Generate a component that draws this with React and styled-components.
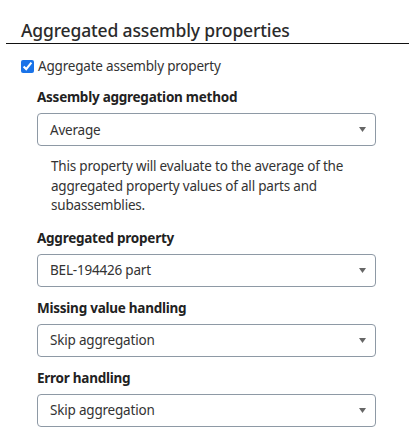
import styled, { createGlobalStyle } from 'styled-components';

const GlobalStyle = createGlobalStyle`
    body {
        margin: 0;
        background: #fff;
        font-family: "Noto Sans", "Open Sans", sans-serif;
        color: #333;
    }
`

const Panel = styled.div`
    width: 409px;
    padding-left: 6px;
    box-sizing: border-box;
`
const Header = styled.h2`
    margin: 0;
    padding: 18px 0 1px 15px;
    font-size: 17.5px;
    line-height: 24px;
    letter-spacing: -0.15px;
    font-weight: 500;
    color: #2b2b2b;
    border-bottom: 1px solid #111;
`
const CheckRow = styled.label`
    display: flex;
    align-items: center;
    height: 20px;
    margin-top: 12px;
    padding-left: 15px;
    font-size: 13.5px;
    letter-spacing: -0.2px;
    color: #333;
`
const Checkbox = styled.input`
    width: 13px;
    height: 13px;
    margin: 0 4px 0 0;
    accent-color: #1a73e8;
`
const Body = styled.div`
    display: flex;
    flex-direction: column;
    gap: 11px;
    padding: 11px 33px 0 31px;
`
const Field = styled.div`
    display: flex;
    flex-direction: column;
`
const Label = styled.div`
    font-size: 13.5px;
    line-height: 20px;
    letter-spacing: -0.25px;
    font-weight: 700;
    color: #222;
    margin-bottom: 6px;
`
const Select = styled.div`
    display: flex;
    align-items: center;
    justify-content: space-between;
    height: 33px;
    box-sizing: border-box;
    padding: 0 9px 0 12px;
    border: 1px solid #8e99a5;
    border-radius: 4px;
    font-size: 13.5px;
    letter-spacing: -0.2px;
    color: #333;
`
const Help = styled.p`
    margin: 11px 0 1px;
    padding: 0 14px;
    font-size: 13.5px;
    line-height: 19.5px;
    letter-spacing: -0.2px;
    color: #333;
`

function Caret() {
    return (
        <svg width="7" height="5" viewBox="0 0 7 5">
            <path d="M0 0 H7 L3.5 5 Z" fill="#666" />
        </svg>
    )
}

const fields = [
    {label: 'Assembly aggregation method', value: 'Average', help: 'This property will evaluate to the average of the aggregated property values of all parts and subassemblies.'},
    {label: 'Aggregated property', value: 'BEL-194426 part'},
    {label: 'Missing value handling', value: 'Skip aggregation'},
    {label: 'Error handling', value: 'Skip aggregation'},
]

export default function App() {
    return (
        <Panel>
            <GlobalStyle />
            <Header>Aggregated assembly properties</Header>
            <CheckRow>
                <Checkbox type="checkbox" defaultChecked />
                Aggregate assembly property
            </CheckRow>
            <Body>
                {fields.map((f) => (
                    <Field key={f.label}>
                        <Label>{f.label}</Label>
                        <Select>
                            <span>{f.value}</span>
                            <Caret />
                        </Select>
                        {f.help && <Help>{f.help}</Help>}
                    </Field>
                ))}
            </Body>
        </Panel>
    )
}
